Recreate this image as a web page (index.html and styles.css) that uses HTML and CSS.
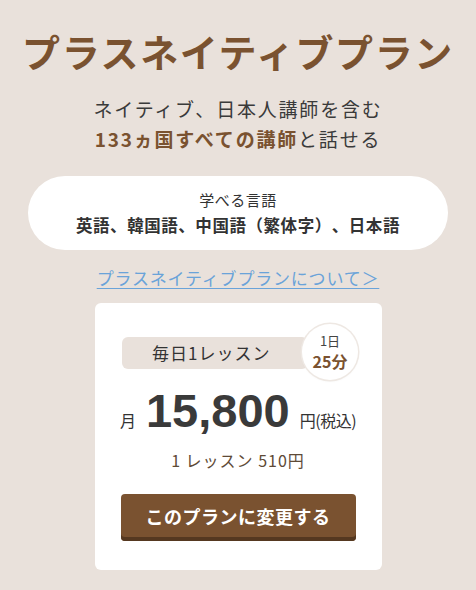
FILE: index.html
```html
<!DOCTYPE html>
<html lang="ja">
<head>
<meta charset="utf-8">
<link rel="stylesheet" href="styles.css">
</head>
<body>
<main class="page">
  <h1 class="title">プラスネイティブプラン</h1>
  <p class="lead">ネイティブ、日本人講師を含む<br><strong>133ヵ国すべての講師</strong>と話せる</p>
  <div class="langs">
    <div class="langs-label">学べる言語</div>
    <div class="langs-list">英語、韓国語、中国語（繁体字）、日本語</div>
  </div>
  <a class="about" href="#">プラスネイティブプランについて＞</a>
  <section class="card">
    <div class="freq">
      <span class="freq-label">毎日1レッスン</span>
      <span class="badge"><span class="badge-top">1日</span><span class="badge-bottom">25分</span></span>
    </div>
    <div class="price">
      <span class="price-month">月</span>
      <span class="price-num">15,800</span>
      <span class="price-unit">円(税込)</span>
    </div>
    <div class="per">1 レッスン 510円</div>
    <button class="cta">このプランに変更する</button>
  </section>
</main>
</body>
</html>
```

FILE: styles.css
```css
html, body {
  margin: 0;
  padding: 0;
}
body {
  background: #e9e1db;
  font-family: "Noto Sans CJK JP", "Noto Sans", sans-serif;
  color: #333;
  width: 476px;
  height: 590px;
  overflow: hidden;
  text-spacing-trim: space-all;
}
.page {
  display: flex;
  flex-direction: column;
  align-items: center;
  padding-top: 26px;
}
.title {
  margin: 0;
  font-size: 38px;
  line-height: 50px;
  font-weight: 700;
  color: #7a5230;
  letter-spacing: 1.6px;
}
.lead {
  margin: 18px 0 0;
  font-size: 19px;
  line-height: 30px;
  text-align: center;
  letter-spacing: 1.8px;
  color: #3a3a3a;
}
.lead strong {
  color: #7a5230;
  font-weight: 700;
}
.langs {
  margin-top: 22px;
  width: 420px;
  height: 74px;
  background: #fff;
  border-radius: 37px;
  display: flex;
  flex-direction: column;
  align-items: center;
  justify-content: center;
  gap: 2px;
}
.langs-label {
  font-size: 15px;
  line-height: 22px;
  color: #333;
  letter-spacing: 0.5px;
}
.langs-list {
  font-size: 16.5px;
  line-height: 24px;
  font-weight: 700;
  color: #333;
  letter-spacing: 0.55px;
}
.about {
  margin-top: 15px;
  font-size: 17px;
  line-height: 26px;
  color: #6aa3d9;
  text-decoration: underline;
  text-underline-offset: 3px;
  letter-spacing: 0.8px;
}
.card {
  margin-top: 12px;
  width: 287px;
  height: 267px;
  background: #fff;
  border-radius: 6px;
  display: flex;
  flex-direction: column;
  align-items: center;
  box-sizing: border-box;
  padding-top: 26px;
}
.freq {
  position: relative;
  width: 232px;
  height: 48px;
  display: flex;
  align-items: center;
}
.freq-label {
  width: 186px;
  height: 32px;
  background: #e9e1db;
  border-radius: 6px;
  font-size: 17px;
  line-height: 32px;
  color: #333;
  box-sizing: border-box;
  padding-left: 30px;
  letter-spacing: 1px;
}
.badge {
  position: absolute;
  left: 180px;
  top: -5px;
  width: 56px;
  height: 56px;
  border-radius: 50%;
  background: #fff;
  box-shadow: 0 0 0 1.5px #eee8e3, 0 1px 3px rgba(0,0,0,0.06);
  display: flex;
  flex-direction: column;
  align-items: center;
  justify-content: center;
}
.badge-top {
  font-size: 13px;
  line-height: 19px;
  color: #444;
}
.badge-bottom {
  font-size: 16px;
  line-height: 23px;
  font-weight: 700;
  color: #7a5230;
}
.price {
  margin-top: 5px;
  display: flex;
  align-items: baseline;
  color: #333;
}
.price-month {
  font-size: 16px;
  margin-right: 10px;
}
.price-num {
  font-family: "Liberation Sans", "Noto Sans", sans-serif;
  font-size: 47px;
  line-height: 58px;
  font-weight: 700;
  color: #3a3a3a;
}
.price-unit {
  font-size: 16px;
  margin-left: 10px;
  letter-spacing: -0.5px;
}
.per {
  margin-top: 8px;
  font-size: 16px;
  line-height: 24px;
  color: #5e4a36;
  letter-spacing: 1px;
}
.cta {
  margin-top: 22px;
  width: 235px;
  height: 47px;
  border: none;
  border-radius: 4px;
  background: #7a5230;
  box-shadow: inset 0 -4px 0 #553820;
  color: #fff;
  font-family: "Noto Sans CJK JP", "Noto Sans", sans-serif;
  font-size: 18px;
  font-weight: 700;
  padding: 0 0 4px;
  letter-spacing: 0.5px;
}
```
